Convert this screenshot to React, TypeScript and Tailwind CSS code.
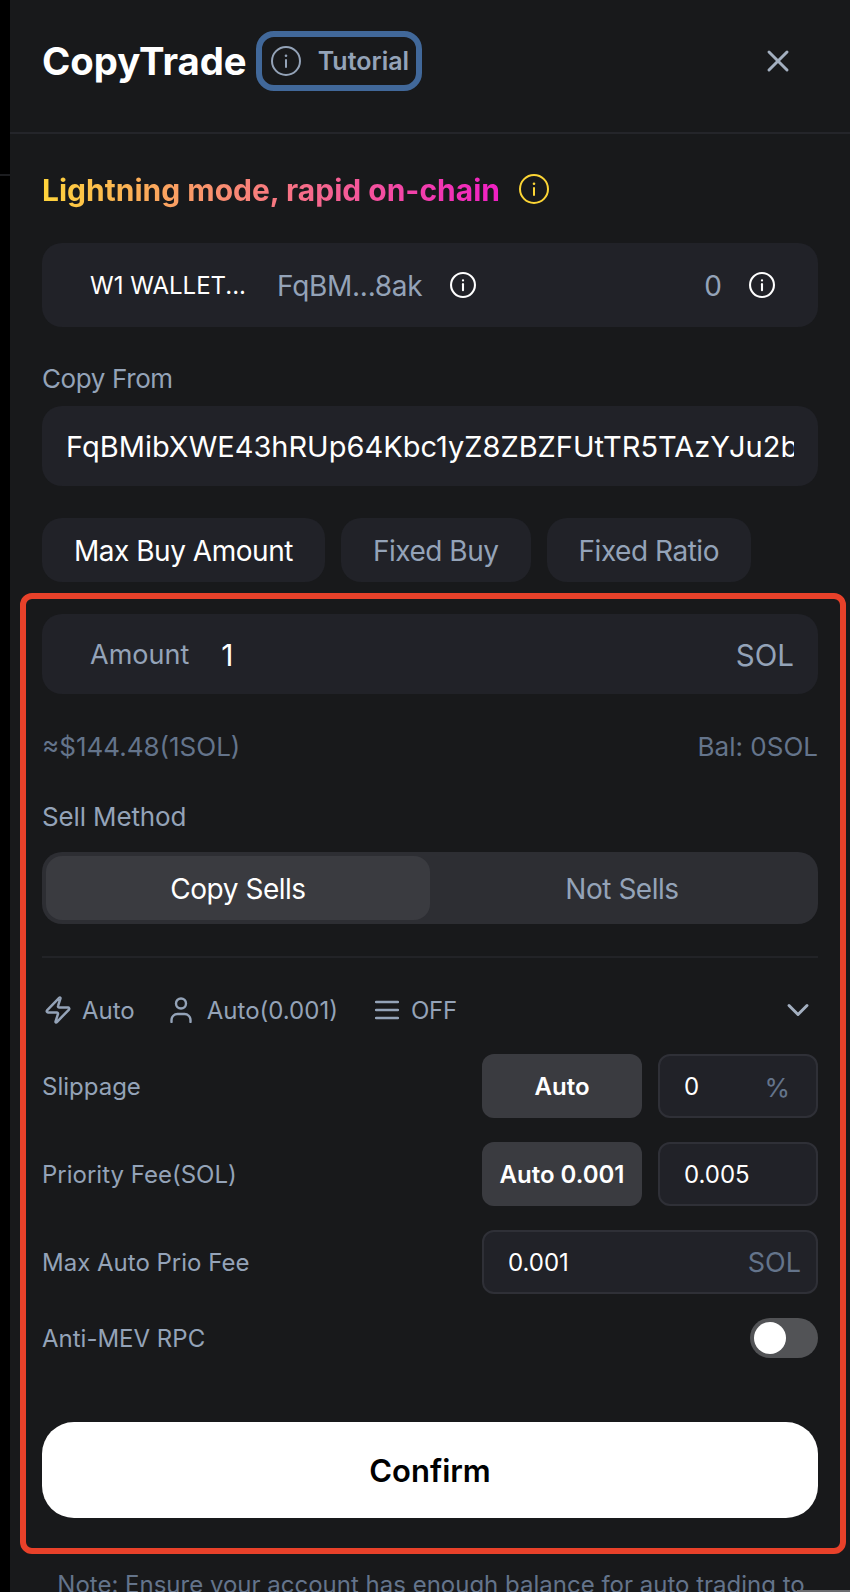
import React from 'react';
import { X, ChevronDown, Zap } from 'lucide-react';

const InfoIcon: React.FC<{ className?: string; sw?: number }> = ({ className, sw = 2 }) => (
  <svg viewBox="0 0 30 30" fill="none" className={className}>
    <circle cx="15" cy="15" r={15 - sw / 2} stroke="currentColor" strokeWidth={sw} />
    <circle cx="15" cy="9.8" r="1.3" fill="currentColor" />
    <path d="M15 14v7" stroke="currentColor" strokeWidth={sw} strokeLinecap="round" />
  </svg>
);

const UserIcon: React.FC = () => (
  <svg viewBox="0 0 22 26" fill="none" className="h-[26px] w-[22px] shrink-0 text-[#94a3b8]">
    <circle cx="11" cy="6.5" r="5" stroke="currentColor" strokeWidth="2.4" />
    <path d="M1.5 25v-2a6 6 0 0 1 6-6h7a6 6 0 0 1 6 6v2" stroke="currentColor" strokeWidth="2.4" strokeLinecap="round" />
  </svg>
);

const LinesIcon: React.FC = () => (
  <svg viewBox="0 0 24 20" fill="none" className="h-[20px] w-[24px] shrink-0 text-[#94a3b8]">
    <path d="M1 2h22M1 10h22M1 18h22" stroke="currentColor" strokeWidth="2.4" strokeLinecap="round" />
  </svg>
);

const labelClass = 'pt-[2px] text-[24px] leading-[32px] text-[#94a3b8]';
const tabClass = 'flex h-[64px] items-center rounded-[20px] bg-[#212228] px-[32px] pt-[2px] text-[28px] tracking-[-0.017em]';

export default function App() {
  return (
    <div className="relative flex h-[1592px] w-[850px] overflow-hidden bg-black font-['Inter',sans-serif]">
      {/* left gutter */}
      <div className="w-[10px] shrink-0">
        <div className="mt-[174px] h-[2px] bg-[#1c1d20]" />
      </div>

      <div className="min-w-0 flex-1 bg-[#18191b]">
        {/* ── Header ── */}
        <div className="flex h-[134px] items-center justify-between border-b-2 border-[#24252a] px-[32px] pb-[10px]">
          <div className="flex items-center">
            <span className="text-[38.3px] font-bold leading-[44px] text-white">CopyTrade</span>
            <div className="ml-[9px] flex h-[60px] w-[166px] items-center rounded-[18px] border-[6px] border-[#41689a] pl-[9px]">
              <InfoIcon className="h-[30px] w-[30px] text-[#94a3b8]" />
              <span className="ml-[17px] text-[25px] font-semibold leading-[32px] text-[#94a3b8]">Tutorial</span>
            </div>
          </div>
          <X className="mr-[22px] h-[36px] w-[36px] text-[#a3afc0]" strokeWidth={2} />
        </div>

        <div className="px-[32px]">
          {/* ── Mode hint ── */}
          <div className="mt-[35px] flex h-[40px] items-center">
            <span className="bg-linear-to-r/srgb from-[#ffd43b] to-[#f01fc4] bg-clip-text pt-[1px] text-[30px] font-bold leading-[40px] text-transparent">
              Lightning mode, rapid on-chain
            </span>
            <InfoIcon className="ml-[19px] h-[30px] w-[30px] text-[#fcd535]" />
          </div>

          {/* ── Wallet ── */}
          <div className="mt-[34px] flex h-[84px] items-center rounded-[20px] bg-[#212228] pl-[48px] pr-[43px]">
            <span className="w-[153px] whitespace-nowrap pt-[2px] text-[24px] leading-[32px] text-white">W1 WALLET...</span>
            <span className="ml-[34px] pt-[2px] text-[28px] leading-[36px] tracking-[-0.01em] text-[#94a3b8]">FqBM...8ak</span>
            <InfoIcon className="ml-[28px] h-[26px] w-[26px] text-white" sw={2.4} />
            <span className="ml-auto pt-[2px] text-[28px] leading-[36px] text-[#94a3b8]">0</span>
            <InfoIcon className="ml-[27px] h-[26px] w-[26px] text-white" sw={2.4} />
          </div>

          {/* ── Copy from ── */}
          <div className="mt-[36px] text-[26px] leading-[32px] tracking-[-0.015em] text-[#94a3b8]">Copy From</div>
          <div className="mt-[11px] flex h-[80px] items-center rounded-[20px] bg-[#212228] px-[24px]">
            <div className="overflow-hidden whitespace-nowrap pt-[2px] text-[29px] leading-[36px] text-white">
              FqBMibXWE43hRUp64Kbc1yZ8ZBZFUtTR5TAzYJu2bNFq8ak
            </div>
          </div>

          {/* ── Buy mode tabs ── */}
          <div className="mt-[32px] flex gap-[16px]">
            <div className={`${tabClass} text-white`}>Max Buy Amount</div>
            <div className={`${tabClass} text-[#94a3b8]`}>Fixed Buy</div>
            <div className={`${tabClass} text-[#94a3b8]`}>Fixed Ratio</div>
          </div>

          {/* ── Highlighted section ── */}
          <div className="mt-[11px] ml-[-22px] mr-[-28px] rounded-[12px] border-[6px] border-[#e8412a] pb-[30px] pl-[16px] pr-[22px] pt-[15px]">
            <div className="flex h-[80px] items-center rounded-[20px] bg-[#212228] pl-[48px] pr-[24px] pt-[2px]">
              <span className="text-[27px] leading-[32px] text-[#94a3b8]">Amount</span>
              <span className="ml-[32px] text-[30px] leading-[36px] text-white">1</span>
              <span className="ml-auto text-[29.5px] leading-[36px] text-[#94a3b8]">SOL</span>
            </div>

            <div className="mt-[37px] flex justify-between text-[26px] leading-[32px] text-[#64748b]">
              <span>≈$144.48(1SOL)</span>
              <span>Bal: 0SOL</span>
            </div>

            <div className="mt-[38px] text-[26px] leading-[32px] tracking-[-0.005em] text-[#94a3b8]">Sell Method</div>

            <div className="mt-[19px] flex h-[72px] rounded-[20px] bg-[#2d2e33] p-[4px]">
              <div className="flex flex-1 items-center justify-center rounded-[16px] bg-[#3a3b40] pt-[2px] text-[28px] tracking-[-0.017em] text-white">Copy Sells</div>
              <div className="flex flex-1 items-center justify-center pt-[2px] text-[28px] tracking-[-0.017em] text-[#94a3b8]">Not Sells</div>
            </div>

            <div className="mt-[32px] h-[2px] bg-[#222327]" />

            {/* ── Fee summary ── */}
            <div className="mt-[36px] flex h-[32px] items-center text-[24px] leading-[32px] text-[#94a3b8]">
              <Zap className="ml-[1px] h-[30px] w-[30px] shrink-0" strokeWidth={2} />
              <span className="ml-[9px] pt-[2px]">Auto</span>
              <div className="ml-[35px]"><UserIcon /></div>
              <span className="ml-[15px] pt-[2px]">Auto(0.001)</span>
              <div className="ml-[37px]"><LinesIcon /></div>
              <span className="ml-[12px] pt-[2px] tracking-[-0.01em]">OFF</span>
              <ChevronDown className="ml-auto mr-[2px] h-[36px] w-[36px] text-[#a3afc0]" strokeWidth={2} />
            </div>

            {/* ── Fee settings ── */}
            <div className="mt-[28px] flex h-[64px] items-center">
              <span className={labelClass}>Slippage</span>
              <div className="ml-auto flex h-full w-[160px] items-center justify-center rounded-[12px] bg-[#3a3b40] pt-[2px] text-[24px] font-semibold text-white">Auto</div>
              <div className="ml-[16px] flex h-full w-[160px] items-center justify-between rounded-[12px] border-2 border-[#2f3037] bg-[#212228] pl-[24px] pr-[26px] pt-[2px] text-[24px] text-white">
                <span>0</span>
                <span className="text-[26px] text-[#64748b]">%</span>
              </div>
            </div>

            <div className="mt-[24px] flex h-[64px] items-center">
              <span className={labelClass}>Priority Fee(SOL)</span>
              <div className="ml-auto flex h-full w-[160px] items-center justify-center rounded-[12px] bg-[#3a3b40] pt-[2px] text-[24px] font-semibold text-white">Auto 0.001</div>
              <div className="ml-[16px] flex h-full w-[160px] items-center rounded-[12px] border-2 border-[#2f3037] bg-[#212228] pl-[24px] pt-[2px] text-[24px] text-white">0.005</div>
            </div>

            <div className="mt-[24px] flex h-[64px] items-center">
              <span className={labelClass}>Max Auto Prio Fee</span>
              <div className="ml-auto flex h-full w-[336px] items-center justify-between rounded-[12px] border-2 border-[#2f3037] bg-[#212228] pl-[24px] pr-[15px] pt-[2px] text-[24px] text-white">
                <span>0.001</span>
                <span className="text-[27px] text-[#64748b]">SOL</span>
              </div>
            </div>

            <div className="mt-[24px] flex h-[40px] items-center justify-between">
              <span className={labelClass}>Anti-MEV RPC</span>
              <div className="flex h-[40px] w-[68px] items-center rounded-full bg-[#525356] pl-[4px]">
                <div className="h-[32px] w-[32px] rounded-full bg-white" />
              </div>
            </div>

            <div className="mt-[64px] flex h-[96px] items-center justify-center rounded-[32px] bg-white pt-[2px] text-[31px] font-semibold text-black">Confirm</div>
          </div>

          {/* ── Note (runs past the fold) ── */}
          <div className="mt-[11px] whitespace-nowrap pl-[2px] text-center text-[24px] leading-[40px] text-[#64748b]">
            Note: Ensure your account has enough balance for auto trading to
          </div>
        </div>
      </div>

      {/* bottom edge sliver over the note */}
      <div className="absolute bottom-0 right-0 h-[2px] w-[53px] bg-[#6b6c70]" />
    </div>
  );
}
